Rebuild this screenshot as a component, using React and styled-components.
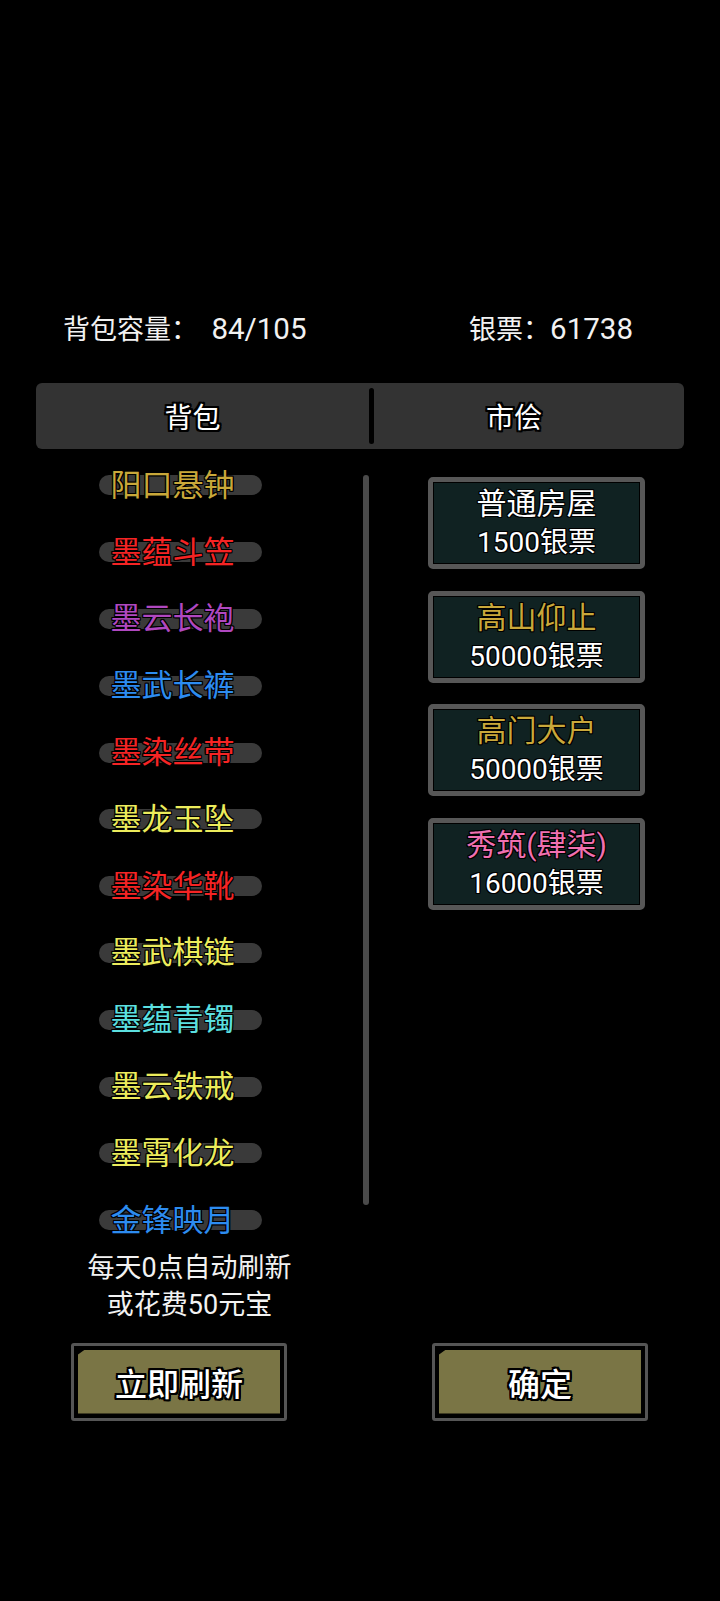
import styled, { createGlobalStyle } from "styled-components";

const GlobalStyle = createGlobalStyle`
  html, body {
    margin: 0;
    padding: 0;
    background: #000;
  }
  body {
    font-family: Roboto, "Noto Sans CJK SC", "Noto Sans", sans-serif;
    color: #fff;
  }
`;

const outline = `
  text-shadow:
    -1px -1px 0 #000, 1px -1px 0 #000, -1px 1px 0 #000, 1px 1px 0 #000,
    0 -1px 0 #000, 0 1px 0 #000, -1px 0 0 #000, 1px 0 0 #000;
`;

const heavyOutline = `
  text-shadow:
    -2px -2px 0 #000, 2px -2px 0 #000, -2px 2px 0 #000, 2px 2px 0 #000,
    0 -2px 0 #000, 0 2px 0 #000, -2px 0 0 #000, 2px 0 0 #000,
    -1px -2px 0 #000, 1px 2px 0 #000, -2px 1px 0 #000, 2px -1px 0 #000;
`;

const Page = styled.div`
  width: 720px;
  height: 1601px;
  box-sizing: border-box;
  padding: 309px 36px 0;
  background: #000;
`;

const Stats = styled.div`
  display: flex;
  align-items: center;
  height: 36px;
  padding: 0 51px 0 27px;
  font-size: 27px;
  color: #f2f2f2;
`;

const Stat = styled.span`
  white-space: pre;
  margin-left: ${(p) => (p.$right ? "auto" : "0")};
`;

const Num = styled.span`
  font-size: 29.5px;
`;

const TabBar = styled.div`
  display: flex;
  align-items: center;
  height: 66px;
  margin-top: 38px;
  background: #333;
  border-radius: 6px;
`;

const Tab = styled.div`
  box-sizing: border-box;
  width: ${(p) => p.$width};
  flex: ${(p) => (p.$width ? "none" : "1")};
  padding-right: ${(p) => p.$shift}px;
  text-align: center;
  font-size: 28px;
  color: #fff;
  ${heavyOutline}
`;

const Divider = styled.div`
  width: 5px;
  height: 56px;
  border-radius: 3px;
  background: #000;
`;

const Content = styled.div`
  display: flex;
  align-items: flex-start;
  margin-top: 3px;
`;

const LeftCol = styled.div`
  width: 327px;
  display: flex;
  flex-direction: column;
`;

const List = styled.div`
  display: flex;
  flex-direction: column;
`;

const Item = styled.div`
  position: relative;
  height: 66.8px;
  width: 163px;
  margin-left: 63px;
  display: flex;
  align-items: center;
  justify-content: center;
  padding-right: 16px;
  box-sizing: border-box;

  &::before {
    content: "";
    position: absolute;
    left: 0;
    right: 0;
    top: 50%;
    height: 20px;
    margin-top: -10px;
    border-radius: 10px;
    background: #3a3a3a;
  }
`;

const ItemName = styled.span`
  position: relative;
  font-size: 31px;
  line-height: 1;
  color: ${(p) => p.$color};
  ${outline}
`;

const Note = styled.div`
  width: 307px;
  margin-top: -4px;
  text-align: center;
  font-size: 27px;
  line-height: 37px;
  color: #f2f2f2;
`;

const Scrollbar = styled.div`
  width: 6px;
  height: 730px;
  margin-top: 23px;
  border-radius: 3px;
  background: #4a4a4a;
`;

const RightCol = styled.div`
  display: flex;
  flex-direction: column;
  gap: 21.7px;
  margin-top: 25px;
  padding-left: 59px;
`;

const Card = styled.div`
  width: 217px;
  height: 92px;
  box-sizing: border-box;
  border: 5px solid #575757;
  border-radius: 5px;
  background: #102222;
  box-shadow: inset 0 0 0 1px #000;
  display: flex;
  flex-direction: column;
  align-items: center;
  justify-content: center;
  gap: 2px;
`;

const CardTitle = styled.div`
  font-size: 30px;
  line-height: 38px;
  color: ${(p) => p.$color};
  ${outline}
`;

const CardPrice = styled.div`
  font-size: 28px;
  line-height: 36px;
  color: #fff;
  ${outline}
`;

const Buttons = styled.div`
  display: flex;
  margin-top: 19px;
  padding-left: 35px;
  gap: 145px;
`;

const Button = styled.div`
  width: 216px;
  height: 78px;
  box-sizing: border-box;
  border: 3px solid #555;
  border-radius: 3px;
  background: #000;
  padding: 4px;
  display: flex;
`;

const ButtonFace = styled.div`
  flex: 1;
  display: flex;
  align-items: center;
  justify-content: center;
  background: #7a7545;
  clip-path: polygon(7px 0, 100% 0, 100% 100%, 0 100%, 0 5px);
  font-size: 32px;
  font-weight: 500;
  color: #fff;
  ${heavyOutline}
`;

const items = [
  ["阳口悬钟", "#c9a83a"],
  ["墨蕴斗笠", "#f52424"],
  ["墨云长袍", "#b048c0"],
  ["墨武长裤", "#2d8cf0"],
  ["墨染丝带", "#f52424"],
  ["墨龙玉坠", "#ecec5c"],
  ["墨染华靴", "#f52424"],
  ["墨武棋链", "#ecec5c"],
  ["墨蕴青镯", "#5ce0e0"],
  ["墨云铁戒", "#ecec5c"],
  ["墨霄化龙", "#ecec5c"],
  ["金锋映月", "#2d8cf0"],
];

const goods = [
  ["普通房屋", "#ffffff", "1500银票"],
  ["高山仰止", "#c9a83a", "50000银票"],
  ["高门大户", "#c9a83a", "50000银票"],
  ["秀筑(肆柒)", "#f070b0", "16000银票"],
];

export default function App() {
  return (
    <Page>
      <GlobalStyle />
      <Stats>
        <Stat>
          背包容量：  <Num>84/105</Num>
        </Stat>
        <Stat $right>
          银票：<Num>61738</Num>
        </Stat>
      </Stats>

      <TabBar>
        <Tab $width="333px" $shift={20}>背包</Tab>
        <Divider />
        <Tab $shift={30}>市侩</Tab>
      </TabBar>

      <Content>
        <LeftCol>
          <List>
            {items.map(([name, color]) => (
              <Item key={name}>
                <ItemName $color={color}>{name}</ItemName>
              </Item>
            ))}
          </List>
          <Note>
            每天0点自动刷新
            <br />
            或花费50元宝
          </Note>
        </LeftCol>
        <Scrollbar />
        <RightCol>
          {goods.map(([title, color, price]) => (
            <Card key={title}>
              <CardTitle $color={color}>{title}</CardTitle>
              <CardPrice>{price}</CardPrice>
            </Card>
          ))}
        </RightCol>
      </Content>

      <Buttons>
        <Button>
          <ButtonFace>立即刷新</ButtonFace>
        </Button>
        <Button>
          <ButtonFace>确定</ButtonFace>
        </Button>
      </Buttons>
    </Page>
  );
}
